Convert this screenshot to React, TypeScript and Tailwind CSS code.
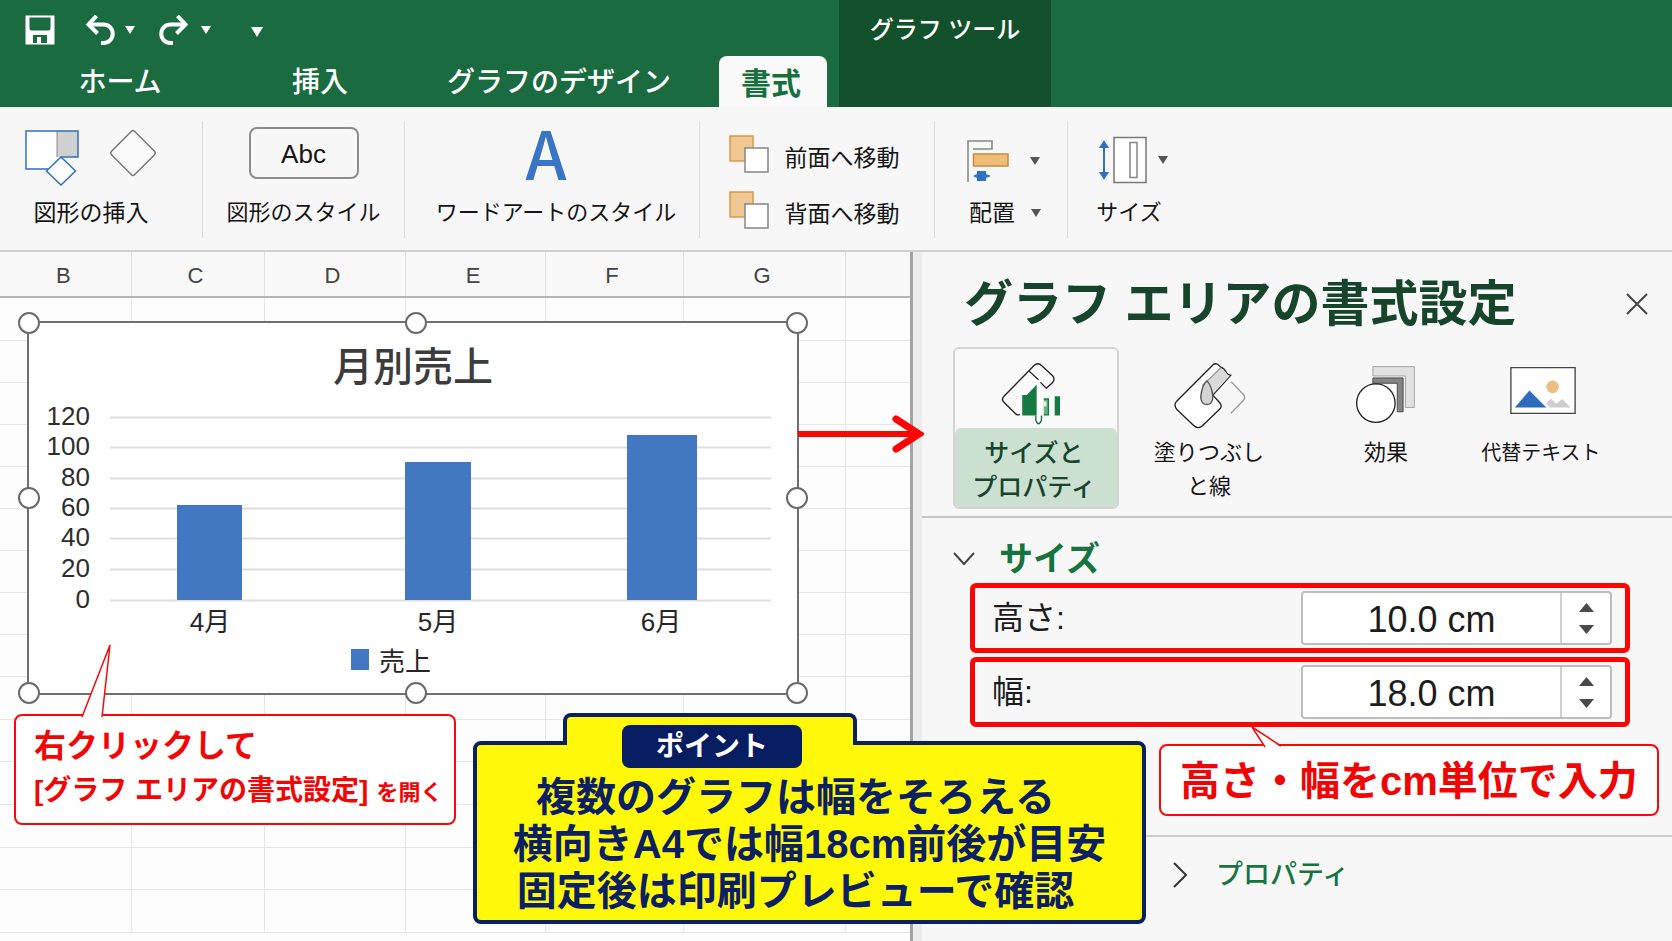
import React from "react";

const months = [
  { label: "4月", x: 177, width: 65, top: 505, center: 210 },
  { label: "5月", x: 405, width: 66, top: 462, center: 438 },
  { label: "6月", x: 627, width: 70, top: 435, center: 661 },
];

const ticks = [
  { value: 120, y: 417 },
  { value: 100, y: 447 },
  { value: 80, y: 478 },
  { value: 60, y: 508 },
  { value: 40, y: 538 },
  { value: 20, y: 569 },
  { value: 0, y: 600 },
];

const handles = [
  [29, 323], [416, 323], [797, 323],
  [29, 498], [797, 498],
  [29, 693], [416, 693], [797, 693],
];

function Caret({ className }: { className: string }) {
  return (
    <svg viewBox="0 0 10 8" preserveAspectRatio="none" className={className} fill="currentColor" aria-hidden="true">
      <path d="M0 0h10L5 8z" />
    </svg>
  );
}

function SaveIcon() {
  return (
    <svg viewBox="0 0 30 30" className="h-[30px] w-[30px]" aria-hidden="true">
      <path d="M0.500 0.500h29v29h-29z" fill="#fff" />
      <path d="M4.500 2.500h21v11q0 2-2 2h-17q-2 0-2-2z" fill="#1b6b40" />
      <path d="M8 20h14v8H8z" fill="#1b6b40" />
      <path d="M12 22h4v6h-4z" fill="#fff" />
    </svg>
  );
}

function UndoIcon({ flip = false }: { flip?: boolean }) {
  return (
    <svg viewBox="0 0 30 30" className="h-[30px] w-[30px]" fill="none" stroke="#fff" strokeWidth="4" aria-hidden="true">
      <g transform={flip ? "matrix(-1 0 0 1 30 0)" : undefined}>
        <path d="M11.500 1 3.500 9.500l9 9" />
        <path d="M4 9.500h14.500a9 9 0 0 1 0 18.500H16" />
      </g>
    </svg>
  );
}

function ShapesIcon() {
  return (
    <svg viewBox="0 0 56 58" className="h-[58px] w-14" aria-hidden="true">
      <path d="M1 2h31v38H1z" fill="#fff" />
      <path d="M32 2h21v26H32z" fill="#d0d0d0" />
      <path d="M32 2v26" stroke="#888" />
      <path d="M23 40H1V2h52v26H36" fill="none" stroke="#2f6fc4" strokeWidth="1.500" />
      <path d="M36 28 50.500 42 36 56 21.500 42z" fill="#fff" stroke="#2f6fc4" strokeWidth="1.500" />
    </svg>
  );
}

function DiamondIcon() {
  return (
    <svg viewBox="0 0 48 48" className="h-12 w-12" aria-hidden="true">
      <path d="M22.500 2.200q1.500-1.400 3 0l20 20q1.500 1.800 0 3.500l-20 20q-1.500 1.500-3 0l-20-20q-1.500-1.700 0-3.500z" fill="#fafafa" stroke="#777" strokeWidth="1.500" />
    </svg>
  );
}

function OrderIcon() {
  return (
    <svg viewBox="0 0 40 38" className="mb-1 h-[38px] w-10" aria-hidden="true">
      <path d="M1 1h23v25H1z" fill="#f0c793" stroke="#d39a50" strokeWidth="1.500" />
      <path d="M16 13h23v24H16z" fill="#fff" stroke="#858585" strokeWidth="1.500" />
    </svg>
  );
}

function AlignIcon() {
  return (
    <svg viewBox="0 0 44 44" className="h-11 w-11" aria-hidden="true">
      <path d="M2 43V2h24v8H7" fill="none" stroke="#858585" strokeWidth="1.500" />
      <path d="M7.500 15H42v12H7.500z" fill="#f0bd78" stroke="#c98b3b" strokeWidth="1.500" />
      <path d="M7 37l4-2v-3h9v3l5 2-5 2v3h-9v-3z" fill="#2f72c4" />
    </svg>
  );
}

function SizeIcon() {
  return (
    <svg viewBox="0 0 50 48" className="h-12 w-[50px]" aria-hidden="true">
      <path d="M6 8v32" stroke="#2f72c4" strokeWidth="2" />
      <path d="M6 4l5 8H1zM6 44l5-8H1z" fill="#2f72c4" />
      <path d="M16 1.500h32v45H16z" fill="#fff" stroke="#777" strokeWidth="1.500" />
      <path d="M32 6.500h7v35h-7z" fill="#fff" stroke="#858585" strokeWidth="1.500" />
    </svg>
  );
}

function SizePropertiesIcon() {
  return (
    <svg viewBox="180 54 190 204" className="h-[68px] w-[63px]" fill="none" strokeWidth="4" aria-hidden="true">
      <path d="M240 220q-7 5-14-2l-34-34q-9-9 0-18l90-92q12-12 24 0l32 29q10 10 0 22l-20 18" fill="#fafafa" stroke="#222" />
      <path d="M268 90l28 26M302 124l16 16" stroke="#222" />
      <path d="M247 162h14l30-32v94h-44z" fill="#157a43" />
      <path d="M291 130q18 0 19 24v70h-19z" fill="#fff" />
      <path d="M288 224v14q8 22 17 0v-14" fill="#fff" stroke="#17653b" />
      <path d="M312 174h14v48h-14" fill="#62b587" stroke="#157a43" />
      <path d="M312 182h8v14h-8z" fill="#e6f3ea" />
      <path d="M345 166h16v58h-16z" fill="#157a43" />
    </svg>
  );
}

function FillIcon() {
  return (
    <svg viewBox="700 54 230 215" className="ml-1 h-[72px] w-[77px]" fill="none" strokeWidth="4" strokeLinejoin="round" aria-hidden="true">
      <path d="M877 122l36 38q8 9 0 18l-37 38" stroke="#9b9b9b" />
      <path d="M822 72 714 180q-10 12 0 24l50 48q13 13 26 2l52-50q10-10 0-20l-20-22 54-60q-9 2-15-10-6-12-16-14-12-16-23-6z" fill="#fff" stroke="#222" />
      <path d="M846 82q9 2 15 12 5 9 12 10l-52 55q-4-30-16-40-8 4-14 10z" fill="#dadada" />
      <path d="M846 80l-56 54" stroke="#9b9b9b" />
      <path d="M804 120c14 12 20 44 17 56q-4 14-17 14t-17-14c-3-12 3-44 17-56z" fill="#d3d3d3" stroke="#555" />
    </svg>
  );
}

function EffectsIcon() {
  return (
    <svg viewBox="100 72 190 184" className="h-[61px] w-[63px]" aria-hidden="true">
      <path d="M157 80h125v123h-27v-95h-98z" fill="#e1e1e1" stroke="#a3a3a3" strokeWidth="3" />
      <path d="M157 114h91v102h-18v-86h-73z" fill="#858585" stroke="#4a4a4a" strokeWidth="3" />
      <path d="M180 132h48v82h-30z" fill="#fafafa" />
      <circle cx="166" cy="190" r="58" fill="#fff" stroke="#222" strokeWidth="4" />
    </svg>
  );
}

function AltTextIcon() {
  return (
    <svg viewBox="568 78 204 148" className="mb-2 ml-1 h-[49px] w-[68px]" aria-hidden="true">
      <path d="M573 83h194v138H573z" fill="#fff" stroke="#444" strokeWidth="4" />
      <path d="M585 203l44-51 51 51z" fill="#2f6cbf" />
      <circle cx="699" cy="141" r="19" fill="#edbd82" />
      <path d="M680 190l14-13 16 15 18-14 25 25h-63z" fill="#cecece" />
    </svg>
  );
}

function RibbonGroup({ className, children }: { className: string; children: React.ReactNode }) {
  return <div className={"flex flex-col items-center border-[#dcdcdc] " + className}>{children}</div>;
}

function Ribbon() {
  return (
    <section aria-label="書式" className="flex h-[145px] items-start border-b-2 border-[#cfcfcf] bg-[#f7f7f7] pt-[14px] text-[#151515]">
      <RibbonGroup className="h-[117px] w-[203px] border-r pr-5">
        <div className="flex h-[72px] items-start gap-7 pt-2">
          <button aria-label="図形"><ShapesIcon /></button>
          <button aria-label="ひし形"><DiamondIcon /></button>
        </div>
        <span className="text-[23px] leading-10">図形の挿入</span>
      </RibbonGroup>
      <RibbonGroup className="h-[117px] w-[202px] border-r">
        <div className="flex h-[72px] items-start pt-[6px]">
          <button className="h-[52px] w-[110px] rounded-lg border-2 border-[#8c8c8c] text-[26px] leading-[50px]">Abc</button>
        </div>
        <span className="text-[22px] leading-10">図形のスタイル</span>
      </RibbonGroup>
      <RibbonGroup className="h-[117px] w-[295px] border-r">
        <button aria-label="ワードアート A" className="mb-6 h-12 pr-3 font-['Noto_Sans_CJK_JP',sans-serif] text-[66px] font-medium leading-[60px] text-[#3a74c4]">
          A
        </button>
        <span className="pl-2 text-[22px] leading-10">ワードアートのスタイル</span>
      </RibbonGroup>
      <RibbonGroup className="h-[117px] w-[235px] gap-[14px] border-r pr-[6px] pt-[14px] text-[23px]">
        <button className="flex h-[42px] items-center gap-4"><OrderIcon /><span className="pt-1">前面へ移動</span></button>
        <button className="flex h-[42px] items-center gap-4"><OrderIcon /><span className="pt-1">背面へ移動</span></button>
      </RibbonGroup>
      <RibbonGroup className="h-[117px] w-[133px] border-r">
        <button aria-label="配置" className="flex h-[80px] items-center gap-5 pl-1 text-[#555]">
          <AlignIcon />
          <Caret className="h-2 w-[10px]" />
        </button>
        <button className="-mt-2 flex items-center gap-4 pl-2 text-[23px] leading-10">
          配置
          <Caret className="h-2 w-[10px] text-[#555]" />
        </button>
      </RibbonGroup>
      <RibbonGroup className="h-[117px] w-[134px]">
        <button aria-label="サイズ" className="flex h-[78px] items-center gap-[10px] pr-1 text-[#555]">
          <SizeIcon />
          <Caret className="h-2 w-[10px]" />
        </button>
        <span className="-mt-[6px] pr-3 text-[22px] leading-10">サイズ</span>
      </RibbonGroup>
    </section>
  );
}

function Header() {
  return (
    <header className="flex h-[107px] bg-[#1b6b40] text-white">
      <div className="flex w-[839px] flex-col">
        <div className="flex h-14 items-center pl-[25px] pt-1">
          <button aria-label="保存"><SaveIcon /></button>
          <button aria-label="元に戻す" className="ml-[30px] flex items-center gap-[10px]"><UndoIcon /><Caret className="h-2 w-[10px]" /></button>
          <button aria-label="やり直し" className="ml-6 flex items-center gap-3"><UndoIcon flip /><Caret className="h-2 w-[10px]" /></button>
          <button aria-label="クイック アクセスのカスタマイズ" className="ml-10 pt-1"><Caret className="h-[10px] w-3" /></button>
        </div>
        <nav className="flex h-[51px] pl-16 text-[28px] font-medium">
          <button className="w-28 pt-[3px]">ホーム</button>
          <button className="ml-22 w-28 pt-[3px]">挿入</button>
          <button className="ml-12 w-[270px] pt-[3px]">グラフのデザイン</button>
          <button className="ml-[25px] w-[108px] rounded-t-lg bg-[#f9f9f9] pr-1 pt-[3px] text-[30px] font-bold text-[#176f3d]">書式</button>
        </nav>
      </div>
      <div className="w-[212px] bg-[#12512b] pt-3 text-center text-[24px] font-medium leading-9">グラフ ツール</div>
    </header>
  );
}

function Chart() {
  return (
    <svg viewBox="16 310 794 396" className="absolute left-4 top-[58px] h-[396px] w-[794px]" role="img" aria-label="月別売上">
      <path d="M28 322h770v372H28z" fill="#fff" stroke="#6f6f6f" strokeWidth="2" />
      <text x="413" y="381" textAnchor="middle" fontSize="40" fontWeight="500" fill="#3c3c3c">月別売上</text>
      {ticks.map((t) => (
        <g key={t.value}>
          <path d={`M110 ${t.y}.500H771`} stroke="#dedede" strokeWidth="2" />
          <text x="90" y={t.y + 8} textAnchor="end" fontSize="26" fill="#2e2e2e">{t.value}</text>
        </g>
      ))}
      {months.map((m) => (
        <g key={m.label}>
          <rect x={m.x} y={m.top} width={m.width} height={600 - m.top} fill="#4277c2" />
          <text x={m.center} y="631" textAnchor="middle" fontSize="26" fill="#262626">{m.label}</text>
        </g>
      ))}
      <rect x="351" y="649" width="18" height="21" fill="#4277c2" />
      <text x="379" y="671" fontSize="26" fill="#262626">売上</text>
      {handles.map(([x, y]) => (
        <circle key={`${x}-${y}`} cx={x} cy={y} r="10" fill="#fff" stroke="#6a6a6a" strokeWidth="2" />
      ))}
    </svg>
  );
}

const columns = [
  { name: "B", width: "w-[131px]" },
  { name: "C", width: "w-[133px]" },
  { name: "D", width: "w-[141px]" },
  { name: "E", width: "w-[140px]" },
  { name: "F", width: "w-[138px]" },
  { name: "G", width: "w-[162px]" },
];

const tallRows = [0, 9, 11, 12, 14];

function Sheet() {
  return (
    <section aria-label="シート" className="relative w-[54.600%] overflow-hidden border-r-[3px] border-[#a3a3a3] bg-[#fdfdfd]">
      <table className="w-full table-fixed border-collapse">
        <thead>
          <tr className="h-[45px] border-b-2 border-[#b5b5b5] bg-[#f8f8f8] text-[22px] text-[#444]">
            {columns.map((c) => (
              <th key={c.name} scope="col" className={"border-r border-r-[#e0e0e0] p-0 pr-1 pt-[3px] font-normal " + c.width}>{c.name}</th>
            ))}
            <th />
          </tr>
        </thead>
        <tbody>
          {Array.from({ length: 15 }, (_, row) => (
            <tr key={row} className={tallRows.includes(row) ? "h-[43px]" : "h-[42px]"}>
              {columns.map((c) => (
                <td key={c.name} className="border border-l-0 border-[#e6e6e6]" />
              ))}
              <td className="border-b border-[#e6e6e6]" />
            </tr>
          ))}
        </tbody>
      </table>
      <Chart />
    </section>
  );
}

function Measure({ id, label, value }: { id: string; label: string; value: string }) {
  return (
    <div className="flex h-[70px] items-center rounded-md border-[5px] border-[#fb0505] pl-[17px] pr-[13px]">
      <label htmlFor={id} className="flex-1 text-[32px] leading-10 text-[#1c1c1c]">{label}</label>
      <div className="flex h-[54px] w-[311px] overflow-hidden rounded border-2 border-[#bdbdbd] bg-white">
        <input id={id} defaultValue={value} className="min-w-0 flex-1 pt-1 text-center text-[36px] leading-[46px] text-[#1c1c1c] outline-none" />
        <div className="flex w-[50px] flex-col items-center justify-center gap-1 border-l-2 border-[#d0d0d0] text-[#4a4a4a]">
          <button aria-label={label + "増やす"} className="flex h-[18px] items-center"><Caret className="h-[9px] w-[15px] rotate-180" /></button>
          <button aria-label={label + "減らす"} className="flex h-[18px] items-center"><Caret className="h-[9px] w-[15px]" /></button>
        </div>
      </div>
    </div>
  );
}

function PanelTab({ icon, children }: { icon: React.ReactNode; children: React.ReactNode }) {
  return (
    <button className="flex flex-col items-center text-[#151515]">
      <span className="flex h-[89px] items-center justify-center pt-[6px]">{icon}</span>
      {children}
    </button>
  );
}

function FormatPanel() {
  return (
    <aside className="relative flex-1 border-l-[9px] border-[#ececec] bg-[#f7f7f7]">
      <div className="flex h-[95px] items-center justify-between pl-[42px] pr-6 pt-2">
        <h1 className="whitespace-nowrap text-[49px] font-bold leading-[60px] text-[#16452c]">グラフ エリアの書式設定</h1>
        <button aria-label="閉じる">
          <svg viewBox="0 0 22 22" className="h-[22px] w-[22px]" stroke="#444" strokeWidth="2" aria-hidden="true"><path d="M1 1l20 20M21 1 1 21" /></svg>
        </button>
      </div>
      <div className="grid h-[171px] grid-cols-[166px_180px_174px_136px] items-start border-b-2 border-[#c4c4c4] pl-[31px]">
        <button className="flex h-[162px] flex-col overflow-hidden rounded-md border-2 border-[#d3d3d3] bg-[#f9f9f9] font-medium text-[#16452c]">
          <span className="flex h-[79px] w-full items-center justify-center pr-2 pt-2"><SizePropertiesIcon /></span>
          <span className="flex w-full flex-1 flex-col rounded-t-md bg-[#cce0d2] pr-1 pt-2">
            <span className="text-[25px] leading-[34px]">サイズと</span>
            <span className="text-[25px] leading-[34px]">プロパティ</span>
          </span>
        </button>
        <PanelTab icon={<FillIcon />}>
          <span className="text-[22px] leading-[34px]">塗りつぶし<br />と線</span>
        </PanelTab>
        <PanelTab icon={<EffectsIcon />}>
          <span className="text-[22px] leading-[34px]">効果</span>
        </PanelTab>
        <PanelTab icon={<AltTextIcon />}>
          <span className="whitespace-nowrap text-[20px] leading-[34px]">代替テキスト</span>
        </PanelTab>
      </div>
      <section className="h-[319px] border-b-2 border-[#cdcdcd] pl-[31px]">
        <h2 className="flex h-[65px] items-center pt-4">
          <button className="flex items-center gap-6 text-[34px] font-bold leading-10 text-[#17743f]">
            <svg viewBox="0 0 22 14" className="h-[14px] w-[22px]" fill="none" stroke="#444" strokeWidth="2" aria-hidden="true"><path d="M1 1l10 11L21 1" /></svg>
            サイズ
          </button>
        </h2>
        <div className="flex flex-col gap-1 pl-[17px] pr-[42px]">
          <Measure id="height" label="高さ:" value="10.0 cm" />
          <Measure id="width" label="幅:" value="18.0 cm" />
        </div>
      </section>
      <h2 className="flex h-[76px] items-center pl-[250px]">
        <button className="flex items-center gap-7 text-[27px] font-medium text-[#17743f]">
          <svg viewBox="0 0 16 26" className="h-[26px] w-4" fill="none" stroke="#333" strokeWidth="2" aria-hidden="true"><path d="M2 1l12 12L2 25" /></svg>
          プロパティ
        </button>
      </h2>
      <div className="absolute left-[237px] right-[13px] top-[492px] h-[72px] rounded-lg border-2 border-[#f90808] bg-white text-center">
        <svg viewBox="0 0 34 22" className="absolute left-[88px] top-[-20px] h-[22px] w-[34px]" aria-hidden="true">
          <path d="M16 22 3 1l30 21z" fill="#fff" />
          <path d="M16 21 3 1l29 19" fill="none" stroke="#f90808" strokeWidth="1.500" />
        </svg>
        <p className="whitespace-nowrap text-[40px] font-bold leading-[70px] text-[#f00505]">高さ・幅をcm単位で入力</p>
      </div>
    </aside>
  );
}

function OpenHint() {
  return (
    <div className="absolute left-[14px] top-[462px] h-[111px] w-[442px] rounded-lg border-2 border-[#f90808] bg-white pl-[18px] pt-2 font-bold text-[#f20505]">
      <svg viewBox="0 0 34 76" className="absolute left-[63px] top-[-74px] h-[76px] w-[34px]" aria-hidden="true">
        <path d="M3 76 31 3l-8 73z" fill="#fff" />
        <path d="M3 75 31 3l-8 72" fill="none" stroke="#f90808" strokeWidth="1.500" />
      </svg>
      <p className="text-[32px] leading-[44px]">右クリックして</p>
      <p className="flex items-baseline gap-2 whitespace-nowrap text-[28px] leading-[46px]">
        [グラフ エリアの書式設定]
        <span className="text-[22px]">を開く</span>
      </p>
    </div>
  );
}

function PointNote() {
  return (
    <div className="absolute left-[473px] top-[461px] w-[673px] text-[#0b2063]">
      <div className="relative z-10 ml-[90px] h-8 w-[294px] rounded-t-lg border-4 border-b-0 border-[#0b2063] bg-[#fff80a] pt-2">
        <h2 className="ml-[55px] h-[43px] w-[180px] rounded-lg bg-[#071d61] text-center text-[28px] font-bold leading-[43px] text-white">ポイント</h2>
      </div>
      <div className="-mt-1 h-[183px] whitespace-nowrap rounded-lg border-4 border-[#0b2063] bg-[#fff80a] pt-[29px] text-center text-[40px] font-bold leading-[47px]">
        <p className="pr-7">複数のグラフは幅をそろえる</p>
        <p>横向きA4では幅18cm前後が目安</p>
        <p className="pr-7">固定後は印刷プレビューで確認</p>
      </div>
    </div>
  );
}

export default function App() {
  return (
    <div lang="ja" className="flex min-h-screen flex-col overflow-hidden bg-[#f7f7f7] font-['Liberation_Sans','Noto_Sans_CJK_JP',sans-serif]">
      <Header />
      <Ribbon />
      <main className="relative flex h-[689px] flex-auto">
        <Sheet />
        <FormatPanel />
        <svg viewBox="0 0 126 40" className="absolute left-[798px] top-[162px] h-10 w-[126px]" fill="none" stroke="#fb0505" aria-hidden="true">
          <path d="M0 20h118" strokeWidth="6" />
          <path d="M98 5l23 15-23 15" strokeWidth="7" strokeLinecap="round" />
        </svg>
        <OpenHint />
        <PointNote />
      </main>
    </div>
  );
}
